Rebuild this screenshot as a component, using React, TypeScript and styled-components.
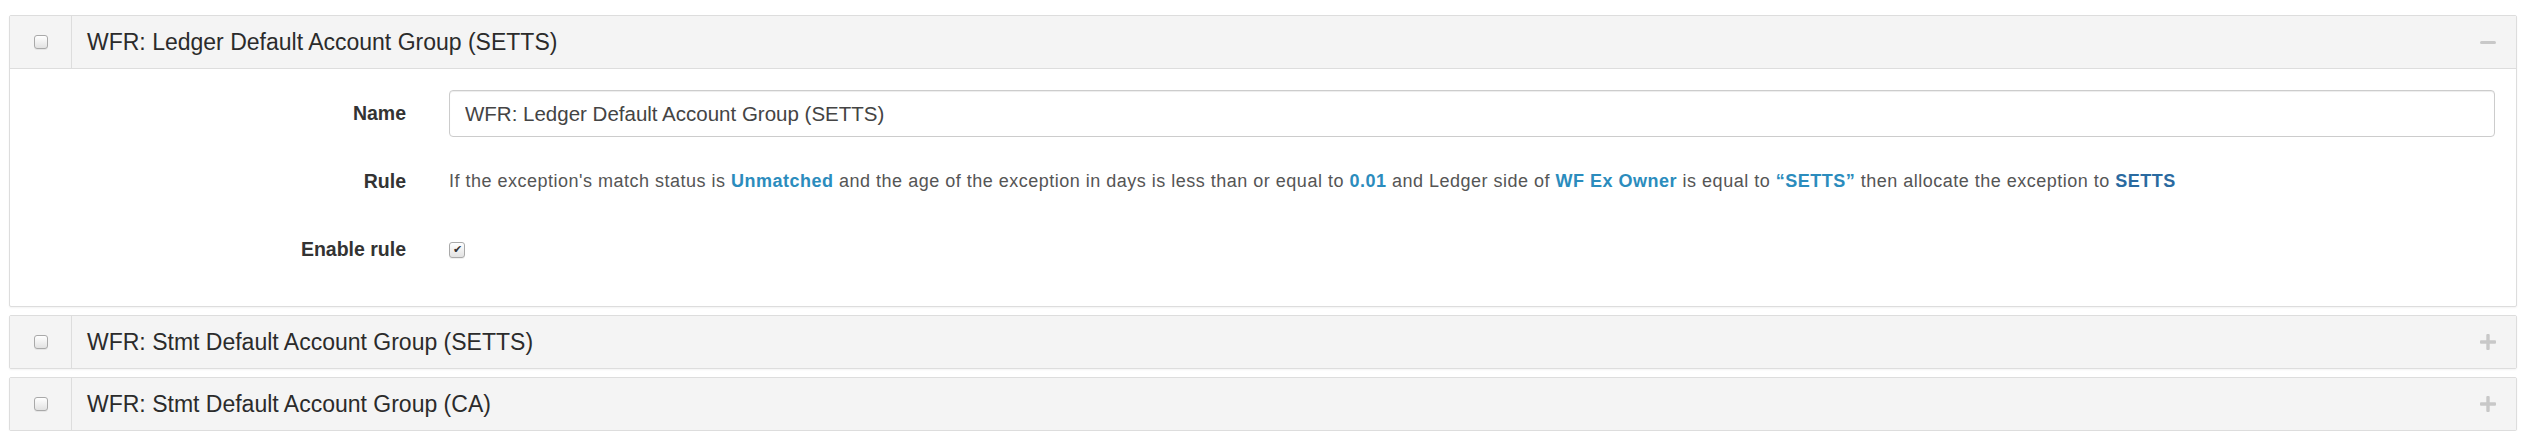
import React from "react";
import styled, { createGlobalStyle } from "styled-components";

const GlobalStyle = createGlobalStyle`
  body {
    margin: 0;
    background: #ffffff;
    font-family: "Liberation Sans", Arial, sans-serif;
    color: #333333;
  }
`;

const Page = styled.div`
  padding: 15px 11px 0 9px;
  display: flex;
  flex-direction: column;
  gap: 8px;
`;

const Panel = styled.div`
  border: 1px solid #dddddd;
  border-radius: 2px;
  background: #ffffff;
  box-shadow: 0 1px 2px rgba(0, 0, 0, 0.05);
`;

const PanelHeader = styled.div<{ $open: boolean }>`
  display: flex;
  align-items: stretch;
  height: 52px;
  background: #f4f4f4;
  border-bottom: ${(p) => (p.$open ? "1px solid #dddddd" : "none")};
`;

const SelectCell = styled.div`
  width: 61px;
  flex: none;
  border-right: 1px solid #dddddd;
  display: flex;
  align-items: center;
  justify-content: center;
`;

const Title = styled.div`
  flex: 1;
  display: flex;
  align-items: center;
  padding-left: 15px;
  font-size: 23px;
  color: #2b2b2b;
`;

const Toggle = styled.div`
  display: flex;
  align-items: center;
  padding-right: 20px;
`;

const Box = styled.span<{ $size: number }>`
  width: ${(p) => p.$size}px;
  height: ${(p) => p.$size}px;
  box-sizing: border-box;
  border: 1px solid #a9a9a9;
  border-radius: 3px;
  background: linear-gradient(#ffffff, #e2e2e2);
  box-shadow: 0 1px 0 rgba(0, 0, 0, 0.06);
  display: inline-flex;
  align-items: center;
  justify-content: center;
  font-size: 11px;
  line-height: 1;
  color: #333333;
`;

const Body = styled.div`
  display: grid;
  grid-template-columns: 396px 1fr;
  column-gap: 43px;
  row-gap: 21px;
  padding: 21px 21px 33px 0;
`;

const Label = styled.div`
  min-height: 47px;
  display: flex;
  align-items: center;
  justify-content: flex-end;
  font-weight: bold;
  font-size: 19.5px;
  color: #333333;
`;

const Control = styled.div`
  min-height: 47px;
  display: flex;
  align-items: center;
`;

const TextInput = styled.input`
  width: 100%;
  height: 47px;
  box-sizing: border-box;
  border: 1px solid #cccccc;
  border-radius: 4px;
  padding: 0 15px;
  box-shadow: inset 0 1px 1px rgba(0, 0, 0, 0.075);
  font-family: "Liberation Sans", Arial, sans-serif;
  font-size: 20.5px;
  color: #444444;
  outline: none;
`;

const RuleText = styled.div`
  font-size: 18px;
  letter-spacing: 0.5px;
  color: #555555;
  white-space: nowrap;
`;

const Token = styled.span<{ $dark?: boolean }>`
  font-weight: bold;
  color: ${(p) => (p.$dark ? "#2a6aa0" : "#2b8cbd")};
`;

const Bar = styled.span`
  display: block;
  width: 16px;
  height: 3px;
  border-radius: 2px;
  background: #c8c8c8;
`;

const PlusIcon = () => (
  <svg width="16" height="16" viewBox="0 0 16 16">
    <rect x="6.3" y="0" width="3.4" height="16" rx="1" fill="#c8c8c8" />
    <rect x="0" y="6.3" width="16" height="3.4" rx="1" fill="#c8c8c8" />
  </svg>
);

interface RuleProps {
  title: string;
  open?: boolean;
}

const RulePanel: React.FC<RuleProps> = ({ title, open = false }) => (
  <Panel>
    <PanelHeader $open={open}>
      <SelectCell>
        <Box $size={14} />
      </SelectCell>
      <Title>{title}</Title>
      <Toggle>{open ? <Bar /> : <PlusIcon />}</Toggle>
    </PanelHeader>
    {open && (
      <Body>
        <Label>Name</Label>
        <Control>
          <TextInput defaultValue={title} />
        </Control>
        <Label>Rule</Label>
        <Control>
          <RuleText>
            If the exception's match status is <Token>Unmatched</Token> and the age of the
            exception in days is less than or equal to <Token>0.01</Token> and Ledger side of{" "}
            <Token>WF Ex Owner</Token> is equal to <Token>“SETTS”</Token> then allocate the
            exception to <Token $dark>SETTS</Token>
          </RuleText>
        </Control>
        <Label>Enable rule</Label>
        <Control>
          <Box $size={16}>✔</Box>
        </Control>
      </Body>
    )}
  </Panel>
);

export default function App() {
  return (
    <>
      <GlobalStyle />
      <Page>
        <RulePanel title="WFR: Ledger Default Account Group (SETTS)" open />
        <RulePanel title="WFR: Stmt Default Account Group (SETTS)" />
        <RulePanel title="WFR: Stmt Default Account Group (CA)" />
      </Page>
    </>
  );
}
